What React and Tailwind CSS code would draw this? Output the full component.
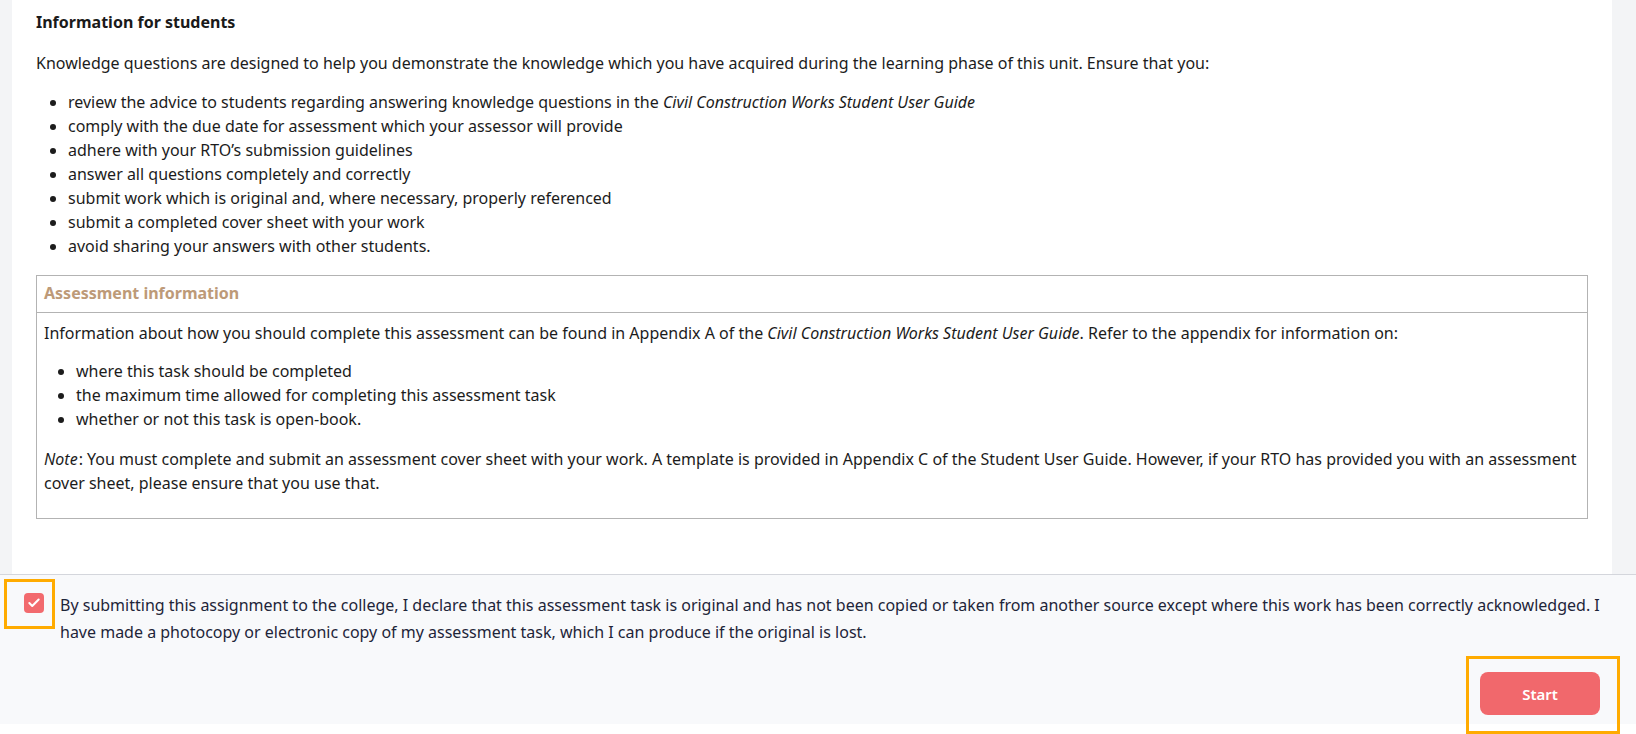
import { Check } from 'lucide-react';

const studentPoints = [
  <>review the advice to students regarding answering knowledge questions in the <em>Civil Construction Works Student User Guide</em></>,
  'comply with the due date for assessment which your assessor will provide',
  'adhere with your RTO’s submission guidelines',
  'answer all questions completely and correctly',
  'submit work which is original and, where necessary, properly referenced',
  'submit a completed cover sheet with your work',
  'avoid sharing your answers with other students.',
];

const appendixPoints = [
  'where this task should be completed',
  'the maximum time allowed for completing this assessment task',
  'whether or not this task is open-book.',
];

const App = () => {
  return (
    <div className="w-full h-[734px] bg-white text-base leading-6 text-[#1c1c1c]" style={{ fontFamily: '"Noto Sans", "Open Sans", sans-serif' }}>
      <div className="flex bg-[#f3f4f6] pl-3 pr-6">
        <div className="flex-1 h-[574px] bg-white px-6 pt-2.5">
          <h3 className="font-bold text-[#1a1a1a]">Information for students</h3>
          <p className="mt-[17px]">
            Knowledge questions are designed to help you demonstrate the knowledge which you have acquired during the learning phase of this unit. Ensure that you:
          </p>
          <ul className="mt-[15px] pl-8 list-disc">
            {studentPoints.map((item, i) => (
              <li key={i}>{item}</li>
            ))}
          </ul>

          <div className="mt-[17px] border border-[#b3b3b3]">
            <div className="px-[7px] pt-[5px] pb-[7px] border-b border-[#b3b3b3] font-bold text-[#bd9a78]">
              Assessment information
            </div>
            <div className="px-[7px] pt-2 pb-[23px]">
              <p>
                Information about how you should complete this assessment can be found in Appendix A of the <em>Civil Construction Works Student User Guide</em>. Refer to the appendix for information on:
              </p>
              <ul className="mt-[14px] pl-8 list-disc">
                {appendixPoints.map((item) => (
                  <li key={item}>{item}</li>
                ))}
              </ul>
              <p className="mt-[16px]">
                <em className="pr-px">Note</em>: You must complete and submit an assessment cover sheet with your work. A template is provided in Appendix C of the Student User Guide. However, if your RTO has provided you with an assessment cover sheet, please ensure that you use that.
              </p>
            </div>
          </div>
        </div>
      </div>

      <div className="relative h-[150px] bg-[#f8f9fb] border-t border-[#d4d6dc]">
        <label className="flex items-start gap-4 pl-6 pr-8 pt-[17px] text-base leading-[27px] text-[#1e2539]">
          <span className="mt-[1px] flex shrink-0 items-center justify-center w-5 h-5 rounded bg-[#f26a6e]">
            <Check className="w-3.5 h-3.5 text-white" strokeWidth={3.5} />
          </span>
          <span>
            By submitting this assignment to the college, I declare that this assessment task is original and has not been copied or taken from another source except where this work has been correctly acknowledged. I have made a photocopy or electronic copy of my assessment task, which I can produce if the original is lost.
          </span>
        </label>
        <div className="flex justify-end pr-9 mt-[26px]">
          <button className="w-[120px] h-[43px] rounded-lg bg-[#f1686c] text-white font-semibold text-[15px]">
            Start
          </button>
        </div>

        <div className="absolute left-[4px] top-[4px] w-[51px] h-[50px] border-[3px] border-[#ffab00]" />
        <div className="absolute left-[1466px] top-[81px] w-[154px] h-[78px] border-[3px] border-[#ffab00]" />
      </div>
    </div>
  );
};

export default App;
